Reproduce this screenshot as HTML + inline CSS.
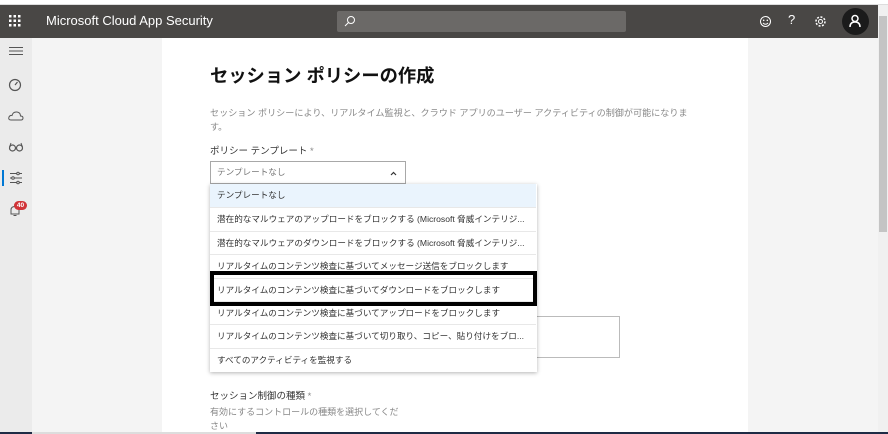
<!DOCTYPE html>
<html><head><meta charset="utf-8"><style>
*{margin:0;padding:0;box-sizing:border-box}
body{width:888px;height:434px;overflow:hidden;position:relative;background:#fff;font-family:"Liberation Sans","Noto Sans CJK JP",sans-serif;}
.abs{position:absolute}
.item{position:absolute;left:0;width:326px;height:23.4px;border-top:1px solid #e8e8e8;font-size:8.6px;color:#333;padding-left:7px;line-height:22px;white-space:nowrap;overflow:hidden}
</style></head><body>
<div class="abs" style="left:0;top:0;width:888px;height:5px;background:#fff;border-bottom:1px solid #ddd"></div>
<div class="abs" style="left:0;top:5px;width:878px;height:33px;background:#494745"></div>
<svg class="abs" style="left:9px;top:15px" width="12" height="12"><g fill="#fff"><rect x="0" y="0" width="2.5" height="2.5"/><rect x="4.5" y="0" width="2.5" height="2.5"/><rect x="9" y="0" width="2.5" height="2.5"/><rect x="0" y="4.5" width="2.5" height="2.5"/><rect x="4.5" y="4.5" width="2.5" height="2.5"/><rect x="9" y="4.5" width="2.5" height="2.5"/><rect x="0" y="9" width="2.5" height="2.5"/><rect x="4.5" y="9" width="2.5" height="2.5"/><rect x="9" y="9" width="2.5" height="2.5"/></g></svg>
<div class="abs" style="left:46px;top:13px;color:#fff;font-size:13px">Microsoft Cloud App Security</div>
<div class="abs" style="left:337px;top:11px;width:289px;height:21px;background:#6b6967;border-radius:2px"></div>
<svg class="abs" style="left:344px;top:15px" width="12" height="12"><circle cx="7" cy="5" r="3.5" fill="none" stroke="#fff" stroke-width="1"/><line x1="4.5" y1="7.5" x2="1" y2="11" stroke="#fff"/></svg>
<svg class="abs" style="left:759px;top:15px" width="13" height="13"><circle cx="6.5" cy="6.5" r="5" fill="none" stroke="#fff"/><circle cx="4.7" cy="5.3" r=".8" fill="#fff"/><circle cx="8.3" cy="5.3" r=".8" fill="#fff"/><path d="M4 8 Q6.5 10.5 9 8" fill="none" stroke="#fff"/></svg>
<div class="abs" style="left:788px;top:12px;color:#fff;font-size:13px">?</div>
<svg class="abs" style="left:814px;top:15px" width="13" height="13"><circle cx="6.5" cy="6.5" r="4.5" fill="none" stroke="#fff" stroke-width="1.5" stroke-dasharray="2 1.5"/><circle cx="6.5" cy="6.5" r="2" fill="none" stroke="#fff"/></svg>
<div class="abs" style="left:842px;top:8px;width:27px;height:27px;border-radius:50%;background:#1b1b1b"></div>
<svg class="abs" style="left:848px;top:14px" width="14" height="14"><circle cx="7" cy="4.5" r="3" fill="none" stroke="#fff" stroke-width="1.5"/><path d="M2 13 Q2 8 7 8 Q12 8 12 13" fill="none" stroke="#fff" stroke-width="1.5"/></svg>
<div class="abs" style="left:0;top:38px;width:32px;height:394px;background:#ebebeb"></div>
<div class="abs" style="left:32px;top:38px;width:130px;height:394px;background:#f4f4f4"></div>
<div class="abs" style="left:748px;top:38px;width:130px;height:394px;background:#f4f4f4"></div>
<div class="abs" style="left:878px;top:5px;width:10px;height:427px;background:#f0f0f0"></div>
<div class="abs" style="left:879px;top:16px;width:8px;height:216px;background:#c4c4c4"></div>
<svg class="abs" style="left:8px;top:46px" width="16" height="10"><g stroke="#555"><line x1="1" y1="1.5" x2="15" y2="1.5"/><line x1="1" y1="5" x2="15" y2="5"/><line x1="1" y1="8.5" x2="15" y2="8.5"/></g></svg>
<svg class="abs" style="left:8px;top:78px" width="14" height="14"><circle cx="7" cy="7" r="5.5" fill="none" stroke="#555" stroke-width="1.2"/><line x1="7" y1="7" x2="9.5" y2="4" stroke="#555" stroke-width="1.2"/></svg>
<svg class="abs" style="left:8px;top:110px" width="16" height="12"><path d="M3 10 Q0 10 1 7 Q2 5 4 5.5 Q5 1.5 9 2 Q12.5 2.5 12.5 6 Q15 6 15 8 Q15 10 13 10Z" fill="none" stroke="#555"/></svg>
<svg class="abs" style="left:8px;top:142px" width="16" height="10"><circle cx="4.5" cy="6" r="3" fill="none" stroke="#555" stroke-width="1.2"/><circle cx="11.5" cy="6" r="3" fill="none" stroke="#555" stroke-width="1.2"/><path d="M1.5 5 L3 1 M14.5 5 L13 1" stroke="#555"/></svg>
<div class="abs" style="left:2px;top:170px;width:2px;height:16px;background:#0078d4"></div>
<svg class="abs" style="left:9px;top:171px" width="14" height="14"><g stroke="#555"><line x1="1" y1="2.5" x2="13" y2="2.5"/><line x1="1" y1="7" x2="13" y2="7"/><line x1="1" y1="11.5" x2="13" y2="11.5"/></g><g fill="#ebebeb" stroke="#555"><circle cx="9" cy="2.5" r="1.3"/><circle cx="4" cy="7" r="1.3"/><circle cx="9" cy="11.5" r="1.3"/></g></svg>
<svg class="abs" style="left:9px;top:205px" width="12" height="12"><path d="M2 9 L2 5 Q2 1.5 6 1.5 Q10 1.5 10 5 L10 9Z M4.5 10.5 L7.5 10.5" fill="none" stroke="#555"/></svg>
<div class="abs" style="left:14px;top:201px;width:13px;height:9px;border-radius:5px;background:#d13438;color:#fff;font-size:6.5px;font-weight:bold;text-align:center;line-height:9px">40</div>
<div class="abs" style="left:210px;top:62px;font-size:18.3px;font-weight:bold;color:#111">セッション ポリシーの作成</div>
<div class="abs" style="left:210px;top:106px;width:500px;font-size:9.1px;color:#888;line-height:14px">セッション ポリシーにより、リアルタイム監視と、クラウド アプリのユーザー アクティビティの制御が可能になりま<br>す。</div>
<div class="abs" style="left:210px;top:143px;font-size:9.5px;color:#333">ポリシー テンプレート <span style="color:#888">*</span></div>
<div class="abs" style="left:210px;top:161px;width:196px;height:23px;border:1px solid #a8a8a8;font-size:8.6px;color:#777;padding-left:6px;line-height:21px">テンプレートなし<svg style="position:absolute;right:8px;top:9px" width="7" height="5"><path d="M1 4 L3.5 1.5 L6 4" fill="none" stroke="#333" stroke-width="1.2"/></svg></div>
<div class="abs" style="left:536px;top:316px;width:84px;height:42px;border:1px solid #bbb;border-left:none"></div>
<div class="abs" style="left:210px;top:184px;width:327px;height:188px;background:#fff;box-shadow:0 1px 4px rgba(0,0,0,.3)">
<div class="item" style="top:0;background:#eaf4fd;border-top:none">テンプレートなし</div>
<div class="item" style="top:23.4px">潜在的なマルウェアのアップロードをブロックする (Microsoft 脅威インテリジ...</div>
<div class="item" style="top:46.8px">潜在的なマルウェアのダウンロードをブロックする (Microsoft 脅威インテリジ...</div>
<div class="item" style="top:70.2px">リアルタイムのコンテンツ検査に基づいてメッセージ送信をブロックします</div>
<div class="item" style="top:93.6px">リアルタイムのコンテンツ検査に基づいてダウンロードをブロックします</div>
<div class="item" style="top:117px">リアルタイムのコンテンツ検査に基づいてアップロードをブロックします</div>
<div class="item" style="top:140.4px">リアルタイムのコンテンツ検査に基づいて切り取り、コピー、貼り付けをブロ...</div>
<div class="item" style="top:163.8px">すべてのアクティビティを監視する</div>
</div>
<div class="abs" style="left:210px;top:271px;width:327px;height:35px;border:4px solid #000"></div>
<div class="abs" style="left:210px;top:388px;font-size:9.5px;color:#333">セッション制御の種類 <span style="color:#888">*</span></div>
<div class="abs" style="left:210px;top:405px;width:200px;font-size:9px;color:#888;line-height:14px">有効にするコントロールの種類を選択してくだ<br>さい</div>
<div class="abs" style="left:0;top:432px;width:888px;height:2px;background:#1e2b45"></div>
<div class="abs" style="left:32px;top:432px;width:224px;height:2px;background:#ddd"></div>
</body></html>
